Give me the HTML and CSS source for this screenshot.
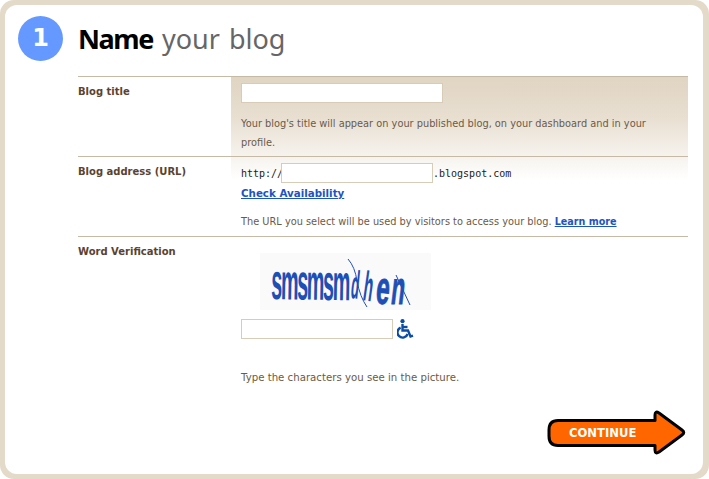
FILE: index.html
```html
<!DOCTYPE html>
<html lang="en">

    <head>
        <meta charset="UTF-8">
        <meta name="viewport" content="width=device-width, initial-scale=1.0">
        <title>Name your blog</title>
        <link rel="stylesheet" href="styles.css">
    </head>

    <body>
        <div class="frame">
            <div class="panel">
                <div class="head">
                    <div class="step">1</div>
                    <h1><b>Name</b> your blog</h1>
                </div>

                <div class="rows">
                    <div class="row row-title">
                        <div class="label">Blog title</div>
                        <div class="field">
                            <input class="txt txt-title" type="text">
                            <p class="help help-title">Your blog's title will appear on your published blog, on your dashboard and in your profile.</p>
                        </div>
                    </div>

                    <div class="row row-url">
                        <div class="label">Blog address (URL)</div>
                        <div class="field">
                            <div class="url"><span>http://</span><input class="txt txt-url" type="text"><span>.blogspot.com</span></div>
                            <a class="link check" href="#">Check Availability</a>
                            <p class="help help-url">The URL you select will be used by visitors to access your blog. <a class="link more" href="#">Learn more</a></p>
                        </div>
                    </div>

                    <div class="row row-word">
                        <div class="label">Word Verification</div>
                        <div class="field">
                            <div class="captcha">
                                <svg width="171" height="57" viewBox="0 0 171 57">
                                    <g class="cap-text">
                                        <text class="cap-tight" transform="translate(11 46) rotate(1) scale(.9 2.300)">smsmsm</text>
                                        <text transform="translate(90 45) rotate(6) scale(.6 1.800)">d</text>
                                        <text transform="translate(102 47) rotate(8) scale(.7 1.900)">h</text>
                                        <text class="cap-heavy" transform="translate(115 50) rotate(6) scale(1.100 2.100)">e</text>
                                        <text class="cap-heavy" transform="translate(130 51) scale(1 2.100) skewX(-14)">n</text>
                                    </g>
                                    <path class="cap-line" d="M88 6Q95 14 97 28Q100 44 107 54" />
                                    <path class="cap-line" d="M136 22L150 52" />
                                </svg>
                            </div>
                            <div class="word">
                                <input class="txt txt-word" type="text">
                                <svg class="wheel" width="17" height="20" viewBox="0 0 17 20">
                                    <circle cx="5.500" cy="2.200" r="2.100" />
                                    <path class="wheel-body" d="M5.500 5V11.500H11L13.500 17.500L16 16.600" />
                                    <path class="wheel-arm" d="M5.500 8H10.500" />
                                    <path class="wheel-arc" d="M3.600 8.600A5.200 5.200 0 1 0 10.600 15" />
                                </svg>
                            </div>
                            <p class="help help-word">Type the characters you see in the picture.</p>
                        </div>
                    </div>
                </div>

                <div class="foot">
                    <svg class="arrow" width="141" height="47" viewBox="0 0 141 47">
                        <path class="arrow-shape" d="M12 11.500H109V6Q109 1.500 113 4L136 21Q139.500 23.500 136 26L113 43Q109 45.500 109 41V36.500H12Q3 36.500 3 27V21Q3 11.500 12 11.500Z" />
                        <text class="arrow-text" x="23" y="27.500">CONTINUE</text>
                    </svg>
                </div>
            </div>
        </div>
    </body>

</html>
```

FILE: styles.css
```css
html,
body {
    margin: 0;
    padding: 0;
    background-color: white;
}

body {
    width: 709px;
    height: 479px;
    font-family: "DejaVu Sans", sans-serif;
    overflow: hidden;
}

.frame {
    height: 479px;
    box-sizing: border-box;
    padding: 5px 6px 5px 5px;
    background-color: #e4dac9;
    border-radius: 14px;
}

.panel {
    height: 469px;
    box-sizing: border-box;
    padding: 11px 0 0 13px;
    background-color: white;
    border-radius: 12px;
}

.head {
    display: flex;
    align-items: center;
    height: 45px;
}

.step {
    width: 45px;
    height: 45px;
    margin-right: 15px;
    border-radius: 50%;
    background-color: #6699ff;
    color: white;
    font-family: "DejaVu Sans", sans-serif;
    font-size: 24px;
    font-weight: 700;
    line-height: 45px;
    text-align: center;
}

h1 {
    margin: 0;
    color: #666666;
    font-family: "Noto Sans", sans-serif;
    font-size: 27px;
    font-weight: 400;
    word-spacing: 2px;
}

h1 b {
    color: black;
    letter-spacing: -1.400px;
}

.rows {
    width: 610px;
    margin: 15px 0 0 60px;
    background: linear-gradient(#e0d4c2, #e8dfd1 40%, white) no-repeat 153px 0 / 457px 104px;
}

.row {
    display: grid;
    grid-template-columns: 153px 457px;
    box-sizing: border-box;
    border-top: 1px solid #c6b9a6;
}

.row-title,
.row-url {
    height: 80px;
}

.label {
    padding-top: 8px;
    color: #5c4230;
    font-size: 10px;
    font-weight: 700;
    line-height: 14px;
}

.field {
    padding-left: 10px;
}

.txt {
    display: block;
    box-sizing: border-box;
    width: 152px;
    height: 20px;
    margin: 0;
    padding: 0;
    border: 1px solid #d8ccb9;
    background-color: white;
}

.txt-title {
    width: 202px;
    margin-top: 6px;
    border-color: #d8ccb9;
}

.help {
    width: 420px;
    margin: 0;
    color: #6b5a48;
    font-size: 9.800px;
    line-height: 19px;
}

.help-title {
    margin-top: 11px;
}

.url {
    display: flex;
    align-items: center;
    margin-top: 6px;
    color: #222222;
    font-family: "DejaVu Sans Mono", monospace;
    font-size: 10px;
}

.url span:first-child {
    width: 40px;
}

.link {
    color: #1d54c4;
    font-weight: 700;
}

.check {
    display: block;
    margin-top: 2px;
    font-size: 10.300px;
    line-height: 16px;
}

.more {
    font-size: 9.600px;
}

.help-url {
    width: 440px;
    margin-top: 11px;
}

.captcha {
    width: 171px;
    height: 57px;
    margin: 16px 0 9px 19px;
    background-color: #fbfafa;
}

.captcha svg {
    display: block;
    overflow: visible;
}

.cap-text {
    fill: #1d4fb5;
    font-family: "Liberation Sans", sans-serif;
    font-size: 22px;
    font-weight: 700;
}

.cap-tight {
    letter-spacing: -1.500px;
}

.cap-heavy {
    stroke: #1d4fb5;
    stroke-width: .500;
}

.cap-line {
    fill: none;
    stroke: #1d4fb5;
    stroke-width: 1;
}

.word {
    display: flex;
    align-items: center;
    gap: 4px;
}

.wheel {
    fill: #0d4da1;
}

.wheel-body,
.wheel-arm,
.wheel-arc {
    fill: none;
    stroke: #0d4da1;
    stroke-width: 2.400;
}

.help-word {
    margin-top: 29px;
    font-size: 10.200px;
}

.foot {
    display: flex;
    justify-content: flex-end;
    margin-top: 22px;
    padding-right: 16px;
}

.arrow-shape {
    fill: #ff6600;
    stroke: black;
    stroke-width: 3;
    stroke-linejoin: round;
}

.arrow-text {
    fill: white;
    font-family: "DejaVu Sans", sans-serif;
    font-size: 11.600px;
    font-weight: 700;
}
```
